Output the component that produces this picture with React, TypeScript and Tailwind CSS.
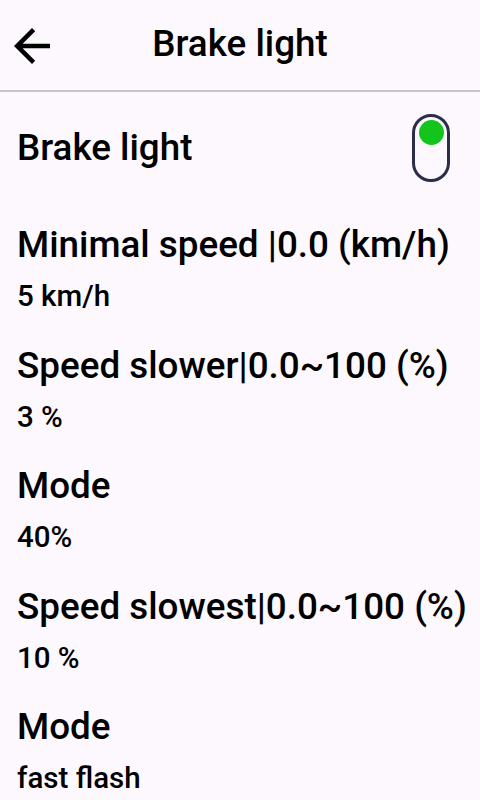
type Item = { title: string; value: string };

const ITEMS: Item[] = [
  { title: "Minimal speed |0.0 (km/h)", value: "5 km/h" },
  { title: "Speed slower|0.0~100 (%)", value: "3 %" },
  { title: "Mode", value: "40%" },
  { title: "Speed slowest|0.0~100 (%)", value: "10 %" },
  { title: "Mode", value: "fast flash" },
];

const BackArrow = () => (
  <svg
    viewBox="0 0 24 24"
    className="absolute left-[5px] top-[19px] w-[54px] h-[54px]"
    fill="currentColor"
  >
    <path d="M20 11H7.83l5.59-5.59L12 4l-8 8 8 8 1.41-1.41L7.83 13H20v-2z" />
  </svg>
);

const App = () => {
  return (
    <div
      className="w-[480px] h-[800px] overflow-hidden bg-[#fdf8fd] text-black"
      style={{ fontFamily: "Roboto, sans-serif" }}
    >
      <div className="relative h-[92px] flex items-center justify-center border-b-2 border-[#c6c6c6]">
        <BackArrow />
        <h1 className="text-[36.8px] font-medium leading-none pb-[1px]">Brake light</h1>
      </div>
      <div className="px-[17px]">
        <div className="flex items-center justify-between h-[112px]">
          <span className="text-[36.8px] font-medium leading-[44px]">Brake light</span>
          <div className="w-[38px] h-[68px] mr-[13px] rounded-full border-[3px] border-[#2c2d47] p-[3px] flex justify-center">
            <div className="w-[25px] h-[25px] rounded-full bg-[#12c41c]" />
          </div>
        </div>
        {ITEMS.map((item, i) => (
          <div key={i} className="flex flex-col h-[120.5px] pt-[19px]">
            <span className="text-[36.8px] font-medium leading-[44px] whitespace-nowrap">{item.title}</span>
            <span className="text-[29.5px] font-medium leading-[36px] mt-[11px]">{item.value}</span>
          </div>
        ))}
      </div>
    </div>
  );
};

export default App;
